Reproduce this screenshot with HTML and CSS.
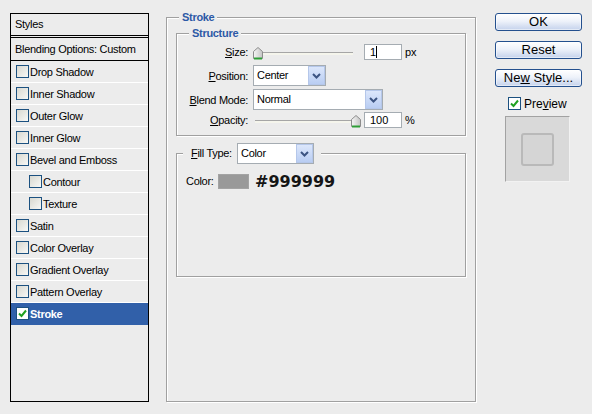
FILE: index.html
```html
<!DOCTYPE html>
<html>
<head>
<meta charset="utf-8">
<link rel="stylesheet" href="styles.css">
</head>
<body>
<div class="styles-panel">
  <div class="panel-head">Styles</div>
  <div class="panel-blend">Blending Options: Custom</div>
  <div class="fx"><span class="cb"></span>Drop Shadow</div>
  <div class="fx"><span class="cb"></span>Inner Shadow</div>
  <div class="fx"><span class="cb"></span>Outer Glow</div>
  <div class="fx"><span class="cb"></span>Inner Glow</div>
  <div class="fx"><span class="cb"></span>Bevel and Emboss</div>
  <div class="fx sub"><span class="cb"></span>Contour</div>
  <div class="fx sub"><span class="cb"></span>Texture</div>
  <div class="fx"><span class="cb"></span>Satin</div>
  <div class="fx"><span class="cb"></span>Color Overlay</div>
  <div class="fx"><span class="cb"></span>Gradient Overlay</div>
  <div class="fx"><span class="cb"></span>Pattern Overlay</div>
  <div class="fx on"><span class="cb checked"><svg width="11" height="11" viewBox="0 0 11 11"><path d="M2 5.5 L4.5 8 L9 2.5" fill="none" stroke="#21a121" stroke-width="2"/></svg></span>Stroke</div>
</div>

<fieldset class="stroke">
  <legend>Stroke</legend>
  <div class="stroke-body">
    <fieldset class="group structure">
      <legend>Structure</legend>
      <div class="structure-body">
        <div class="row row-size">
          <div class="lbl"><u>S</u>ize:</div>
          <div class="slider">
            <div class="track"></div>
            <svg class="thumb" style="left:0px" width="10" height="13" viewBox="0 0 10 13"><defs><linearGradient id="tg1" x1="0" x2="1"><stop offset="0" stop-color="#f6f6f6"/><stop offset="1" stop-color="#c4c4c4"/></linearGradient></defs><path d="M0.5 4.5 L5 0.5 L9.5 4.5 V11.5 H0.5 Z" fill="url(#tg1)" stroke="#8c8c8c"/><path d="M1 11.5 H9" stroke="#2e9e37" stroke-width="2"/></svg>
          </div>
          <div class="num">1<span class="caret"></span></div>
          <div class="unit">px</div>
        </div>
        <div class="row row-pos">
          <div class="lbl"><u>P</u>osition:</div>
          <div class="select sel-pos"><span class="val">Center</span><span class="dd"><svg width="15" height="17" viewBox="0 0 15 17"><path d="M4 7 L7.5 10.5 L11 7" fill="none" stroke="#3c5482" stroke-width="2"/></svg></span></div>
        </div>
        <div class="row row-blend">
          <div class="lbl"><u>B</u>lend Mode:</div>
          <div class="select sel-blend"><span class="val">Normal</span><span class="dd"><svg width="15" height="17" viewBox="0 0 15 17"><path d="M4 7 L7.5 10.5 L11 7" fill="none" stroke="#3c5482" stroke-width="2"/></svg></span></div>
        </div>
        <div class="row row-opac">
          <div class="lbl"><u>O</u>pacity:</div>
          <div class="slider">
            <div class="track"></div>
            <svg class="thumb" style="left:98px" width="10" height="13" viewBox="0 0 10 13"><defs><linearGradient id="tg2" x1="0" x2="1"><stop offset="0" stop-color="#f6f6f6"/><stop offset="1" stop-color="#c4c4c4"/></linearGradient></defs><path d="M0.5 4.5 L5 0.5 L9.5 4.5 V11.5 H0.5 Z" fill="url(#tg2)" stroke="#8c8c8c"/><path d="M1 11.5 H9" stroke="#2e9e37" stroke-width="2"/></svg>
          </div>
          <div class="num">100</div>
          <div class="unit">%</div>
        </div>
      </div>
    </fieldset>

    <fieldset class="group fill">
      <legend><span class="fill-lbl"><u>F</u>ill Type:</span><span class="select sel-fill"><span class="val">Color</span><span class="dd"><svg width="15" height="17" viewBox="0 0 15 17"><path d="M4 7 L7.5 10.5 L11 7" fill="none" stroke="#3c5482" stroke-width="2"/></svg></span></span></legend>
      <div class="fill-body">
        <div class="color-row">
          <span class="color-lbl">Color:</span>
          <span class="chip"></span>
          <span class="hex">#999999</span>
        </div>
      </div>
    </fieldset>
  </div>
</fieldset>

<div class="actions">
  <button class="btn">OK</button>
  <button class="btn">Reset</button>
  <button class="btn">Ne<u>w</u> Style...</button>
  <div class="preview-row"><span class="cb checked"><svg width="11" height="11" viewBox="0 0 11 11"><path d="M2 5.5 L4.5 8 L9 2.5" fill="none" stroke="#21a121" stroke-width="2"/></svg></span><span>Pre<u>v</u>iew</span></div>
  <div class="preview-box"><div class="preview-square"></div></div>
</div>
</body>
</html>
```
FILE: styles.css
```css
* { box-sizing: border-box; }
html, body { margin: 0; }
body {
  background: #ececec;
  font-family: "Liberation Sans", Arial, sans-serif;
  font-size: 11px;
  letter-spacing: -0.3px;
  color: #000;
  display: flex;
  align-items: flex-start;
  padding-left: 10px;
  width: 592px;
  height: 414px;
  overflow: hidden;
}

/* left styles list */
.styles-panel {
  margin-top: 13px;
  width: 139px;
  height: 389px;
  border: 1px solid #000;
  flex: none;
}
.panel-head {
  height: 24px;
  border-bottom: 3px double #000;
  padding-left: 4px;
  line-height: 21px;
}
.panel-blend {
  height: 23px;
  border-bottom: 1px solid #000;
  padding-left: 4px;
  line-height: 22px;
}
.fx {
  display: flex;
  align-items: center;
  gap: 1px;
  height: 22px;
  border-bottom: 1px solid #fff;
  padding-left: 5px;
}
.fx.sub { padding-left: 18px; }
.fx.on {
  background: #3160a9;
  border-bottom-color: #3160a9;
  color: #fff;
  font-weight: bold;
}
.cb {
  display: inline-block;
  width: 13px;
  height: 13px;
  flex: none;
  border: 1px solid #1c5180;
  background: linear-gradient(135deg, #d8d8d0, #f8f8f6);
}
.cb.checked { background: #fff; }
.cb svg { display: block; }

/* stroke fieldset */
fieldset {
  margin: 0;
  padding: 0;
  min-width: 0;
  border: 1px solid #a0a0a0;
  box-shadow: 1px 1px 0 #fff, inset 1px 1px 0 #fff;
}
legend {
  padding: 0 3px;
  margin-left: 12px;
  line-height: 13px;
  font-weight: bold;
  color: #2c59a6;
  background: #ececec;
}
.stroke {
  margin: 11px 0 0 17px;
  width: 310px;
  flex: none;
}
.stroke-body {
  height: 377px;
  padding: 3px 0 0 9px;
}
.group { width: 290px; }
.structure-body { padding: 4px 0 7px 0; }

.row { display: flex; align-items: center; }
.lbl {
  width: 71px;
  margin-right: 5px;
  text-align: right;
  flex: none;
}
.row-size { height: 16px; }
.row-pos { height: 21px; margin-top: 5px; }
.row-blend { height: 21px; margin-top: 3px; }
.row-opac { height: 16px; margin-top: 2px; }

.slider {
  position: relative;
  width: 110px;
  height: 16px;
  padding-top: 8px;
  flex: none;
}
.track {
  height: 3px;
  margin: 0 10px 0 2px;
  border-top: 1px solid #a6a6a6;
  background: #f5f5ec;
}
.thumb {
  position: absolute;
  top: 3px;
  display: block;
}
.num {
  width: 38px;
  height: 16px;
  margin-left: 1px;
  padding-left: 5px;
  border: 1px solid #a5acb2;
  background: #fff;
  line-height: 14px;
  letter-spacing: 0;
  flex: none;
}
.caret {
  display: inline-block;
  width: 1px;
  height: 12px;
  background: #000;
  vertical-align: -2px;
}
.unit { margin-left: 3px; letter-spacing: 0; }

.select {
  display: flex;
  height: 21px;
  border: 1px solid #a5acb2;
  background: #fff;
  flex: none;
  font-weight: normal;
  color: #000;
}
.select .val {
  flex: 1;
  padding-left: 3px;
  line-height: 19px;
  font-size: 11px;
}
.select .dd {
  width: 17px;
  height: 19px;
  border: 1px solid #b5c7ea;
  background: linear-gradient(#dce7fb, #b9cdf3);
  display: flex;
  align-items: center;
  justify-content: center;
}
.select .dd svg { display: block; }
.sel-pos { width: 73px; }
.sel-blend { width: 130px; }
.sel-fill { width: 77px; }

/* fill type */
.group.fill { margin-top: 7px; }
.fill legend {
  display: flex;
  align-items: center;
  margin-left: 6px;
  padding: 0 7px 0 8px;
  line-height: 21px;
}
.fill-lbl {
  width: 46px;
  font-weight: normal;
  color: #000;
}
.fill-body {
  height: 112px;
  padding: 9px 0 0 9px;
}
.color-row {
  display: flex;
  align-items: center;
  height: 16px;
}
.color-lbl { width: 32px; }
.chip {
  width: 31px;
  height: 15px;
  background: #999;
  border: 1px solid #a3a3a3;
}
.hex {
  margin-left: 6px;
  font-family: "DejaVu Sans", sans-serif;
  font-weight: bold;
  font-size: 16px;
  letter-spacing: 0;
  color: #151515;
}

/* right actions */
.actions {
  margin: 13px 0 0 19px;
  width: 87px;
  flex: none;
}
.btn {
  display: block;
  width: 87px;
  height: 18px;
  margin: 0 0 10px 0;
  padding: 0;
  border: 1px solid #24508e;
  border-radius: 3px;
  background: linear-gradient(#ffffff, #eef2fa 45%, #c4d2ec);
  box-shadow: inset 0 0 0 1px rgba(255,255,255,0.5);
  font-family: "Liberation Sans", Arial, sans-serif;
  font-size: 13px;
  letter-spacing: 0;
  line-height: 16px;
  color: #000;
  text-align: center;
}
.preview-row {
  display: flex;
  align-items: center;
  gap: 3px;
  height: 13px;
  padding-left: 13px;
  font-size: 12px;
  letter-spacing: 0;
}
.preview-box {
  width: 65px;
  height: 66px;
  margin: 6px 0 0 10px;
  background: #d9d9d9;
  border-top: 1px solid #a2a2a2;
  border-left: 1px solid #a2a2a2;
  border-right: 1px solid #f2f2f2;
  border-bottom: 1px solid #f2f2f2;
  display: flex;
  align-items: center;
  justify-content: center;
}
.preview-square {
  width: 33px;
  height: 33px;
  border: 2px solid #b9b9b9;
  border-radius: 3px;
  background: #d5d5d5;
}
```
